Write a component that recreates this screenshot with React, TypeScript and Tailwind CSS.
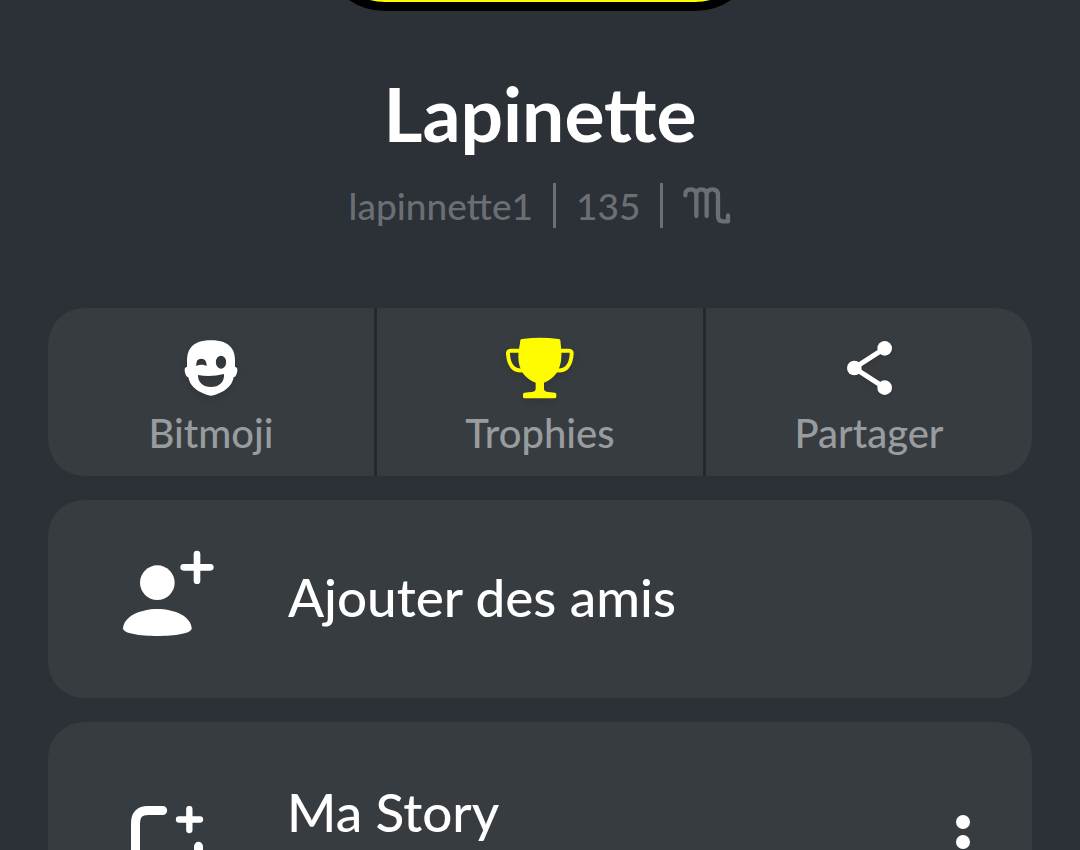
function ScorpioIcon() {
  return (
    <svg viewBox="40 36 144 111" className="h-[37px] w-12" fill="none" stroke="currentColor" strokeWidth="13" strokeLinecap="round" strokeLinejoin="round" aria-label="Scorpion">
      <path d="M47 61V59Q47 43 63 43Q80 43 80 60V123M80 60Q80 43 95 43Q111 43 111 60V123M111 60Q111 43 128 43Q145 43 145 60V122Q145 139 160 139H175V121" />
    </svg>
  );
}

function BitmojiIcon() {
  return (
    <svg viewBox="36 30 180 195" className="h-[65px] w-[60px] drop-shadow-md" fill="#fff" fillRule="evenodd">
      <path d="M126 46C154 46 176 53 188 70C196 81 198 94 198 108V126Q206 126 205 137Q203 154 194 157C190 177 179 188 164 198C149 206 136 212 126 212C116 212 103 206 88 198C73 188 62 177 58 157Q49 154 47 137Q46 126 54 126V108C54 94 56 81 64 70C76 53 98 46 126 46ZM82 123Q80 101 97 101Q113 101 113 123Q97 116 82 123ZM156 92A15 19 0 1 0 156 131A15 19 0 1 0 156 92ZM87 150Q125 157 165 147C167 172 150 186 126 186C103 186 86 172 87 150Z" />
    </svg>
  );
}

function TrophyIcon() {
  return (
    <svg viewBox="32 30 210 195" className="h-[65px] w-[70px] drop-shadow-md" fill="#fffc00">
      <path d="M78 46Q79 42 84 42Q138 35 192 42Q197 42 198 46C199 60 202 75 201 95C200 135 180 160 149 173V193Q150 199 156 200L182 203Q186 204 186 208V215Q186 220 181 220H91Q86 220 86 215V208Q86 204 90 203L117 200Q123 199 124 193V173C92 160 72 135 72 95C72 75 77 60 78 46Z" />
      <path d="M77 77H49Q40 77 41 87C43 121 58 139 86 136M196 77H224Q233 77 232 87C230 121 215 139 187 136" fill="none" stroke="#fffc00" strokeWidth="12" />
    </svg>
  );
}

function ShareIcon() {
  return (
    <svg viewBox="40 30 150 195" className="h-[65px] w-[50px] drop-shadow-sm" fill="#fff">
      <path d="M162 70L71 129L162 188" fill="none" stroke="#fff" strokeWidth="15" />
      <circle cx="162" cy="70" r="22" />
      <circle cx="71" cy="129" r="22" />
      <circle cx="162" cy="188" r="22" />
    </svg>
  );
}

function AddFriendIcon() {
  return (
    <svg viewBox="36 45 276 261" className="h-[87px] w-[92px]" fill="#fff">
      <circle cx="142" cy="143" r="52" />
      <path d="M39 280C41 245 90 222 142 222C195 222 243 245 245 280C245 296 195 303 142 303C90 303 39 296 39 280Z" />
      <path d="M261 57V137M221 97H301" stroke="#fff" strokeWidth="20" strokeLinecap="round" />
    </svg>
  );
}

function AddStoryIcon() {
  return (
    <svg viewBox="63 48 219 219" className="h-[73px] w-[73px]" fill="none" stroke="#fff" strokeLinecap="round">
      <path d="M158 61.500H114Q76.500 61.500 76.500 99V216Q76.500 253 114 253H228Q265.500 253 265.500 216V169" strokeWidth="27" />
      <path d="M238 57V120M207 88.500H270" strokeWidth="19" />
    </svg>
  );
}

const actions = [
  { label: "Bitmoji", icon: <BitmojiIcon /> },
  { label: "Trophies", icon: <TrophyIcon /> },
  { label: "Partager", icon: <ShareIcon /> },
];

export default function App() {
  return (
    <main className="h-screen overflow-hidden bg-[#2c3037] font-['Lato',sans-serif] font-medium text-white">

      {/* SNAPCODE */}
      <div className="mx-auto -mt-[189px] h-[200px] w-[438px] rounded-[64px] border-[9px] border-black bg-[#fffc00]" />

      {/* PROFILE */}
      <header className="flex flex-col items-center pt-[62px]">
        <h1 className="text-[75px] leading-20 font-bold">Lapinette</h1>
        <div className="mt-[30px] flex h-[45px] items-center gap-5 text-[37px] leading-[45px] text-[#6b6e73]">
          <span>lapinnette1</span>
          <span className="h-full w-[3px] bg-current" />
          <span>135</span>
          <span className="h-full w-[3px] bg-current" />
          <ScorpioIcon />
        </div>
      </header>

      <div className="mt-20 flex flex-col gap-6 px-12">

        {/* ACTIONS */}
        <div className="grid grid-cols-3 gap-[3px] overflow-hidden rounded-[36px] bg-[#25282d]">
          {actions.map(({ label, icon }) => (
            <button key={label} className="flex h-[168px] flex-col items-center bg-[#373c40] pt-[27px]">
              {icon}
              <span className="mt-2 text-[40px] leading-[50px] text-[#999c9f]">{label}</span>
            </button>
          ))}
        </div>

        {/* ADD FRIENDS */}
        <button className="flex h-[198px] items-center gap-[74px] rounded-[36px] bg-[#373c40] pr-16 pb-3 pl-[74px] text-left">
          <AddFriendIcon />
          <span className="pt-2 text-[53px] leading-[60px]">Ajouter des amis</span>
        </button>

        {/* STORY */}
        <div className="flex h-60 items-center rounded-[36px] bg-[#373c40] pr-[62px] pl-[83px]">
          <AddStoryIcon />
          <h2 className="ml-[83px] flex-1 self-start pt-[60px] text-[53px] leading-[60px]">Ma Story</h2>
          <button aria-label="Options" className="flex flex-col gap-[6px]">
            <span className="size-[14px] rounded-full bg-white" />
            <span className="size-[14px] rounded-full bg-white" />
            <span className="size-[14px] rounded-full bg-white" />
          </button>
        </div>

      </div>
    </main>
  );
}
